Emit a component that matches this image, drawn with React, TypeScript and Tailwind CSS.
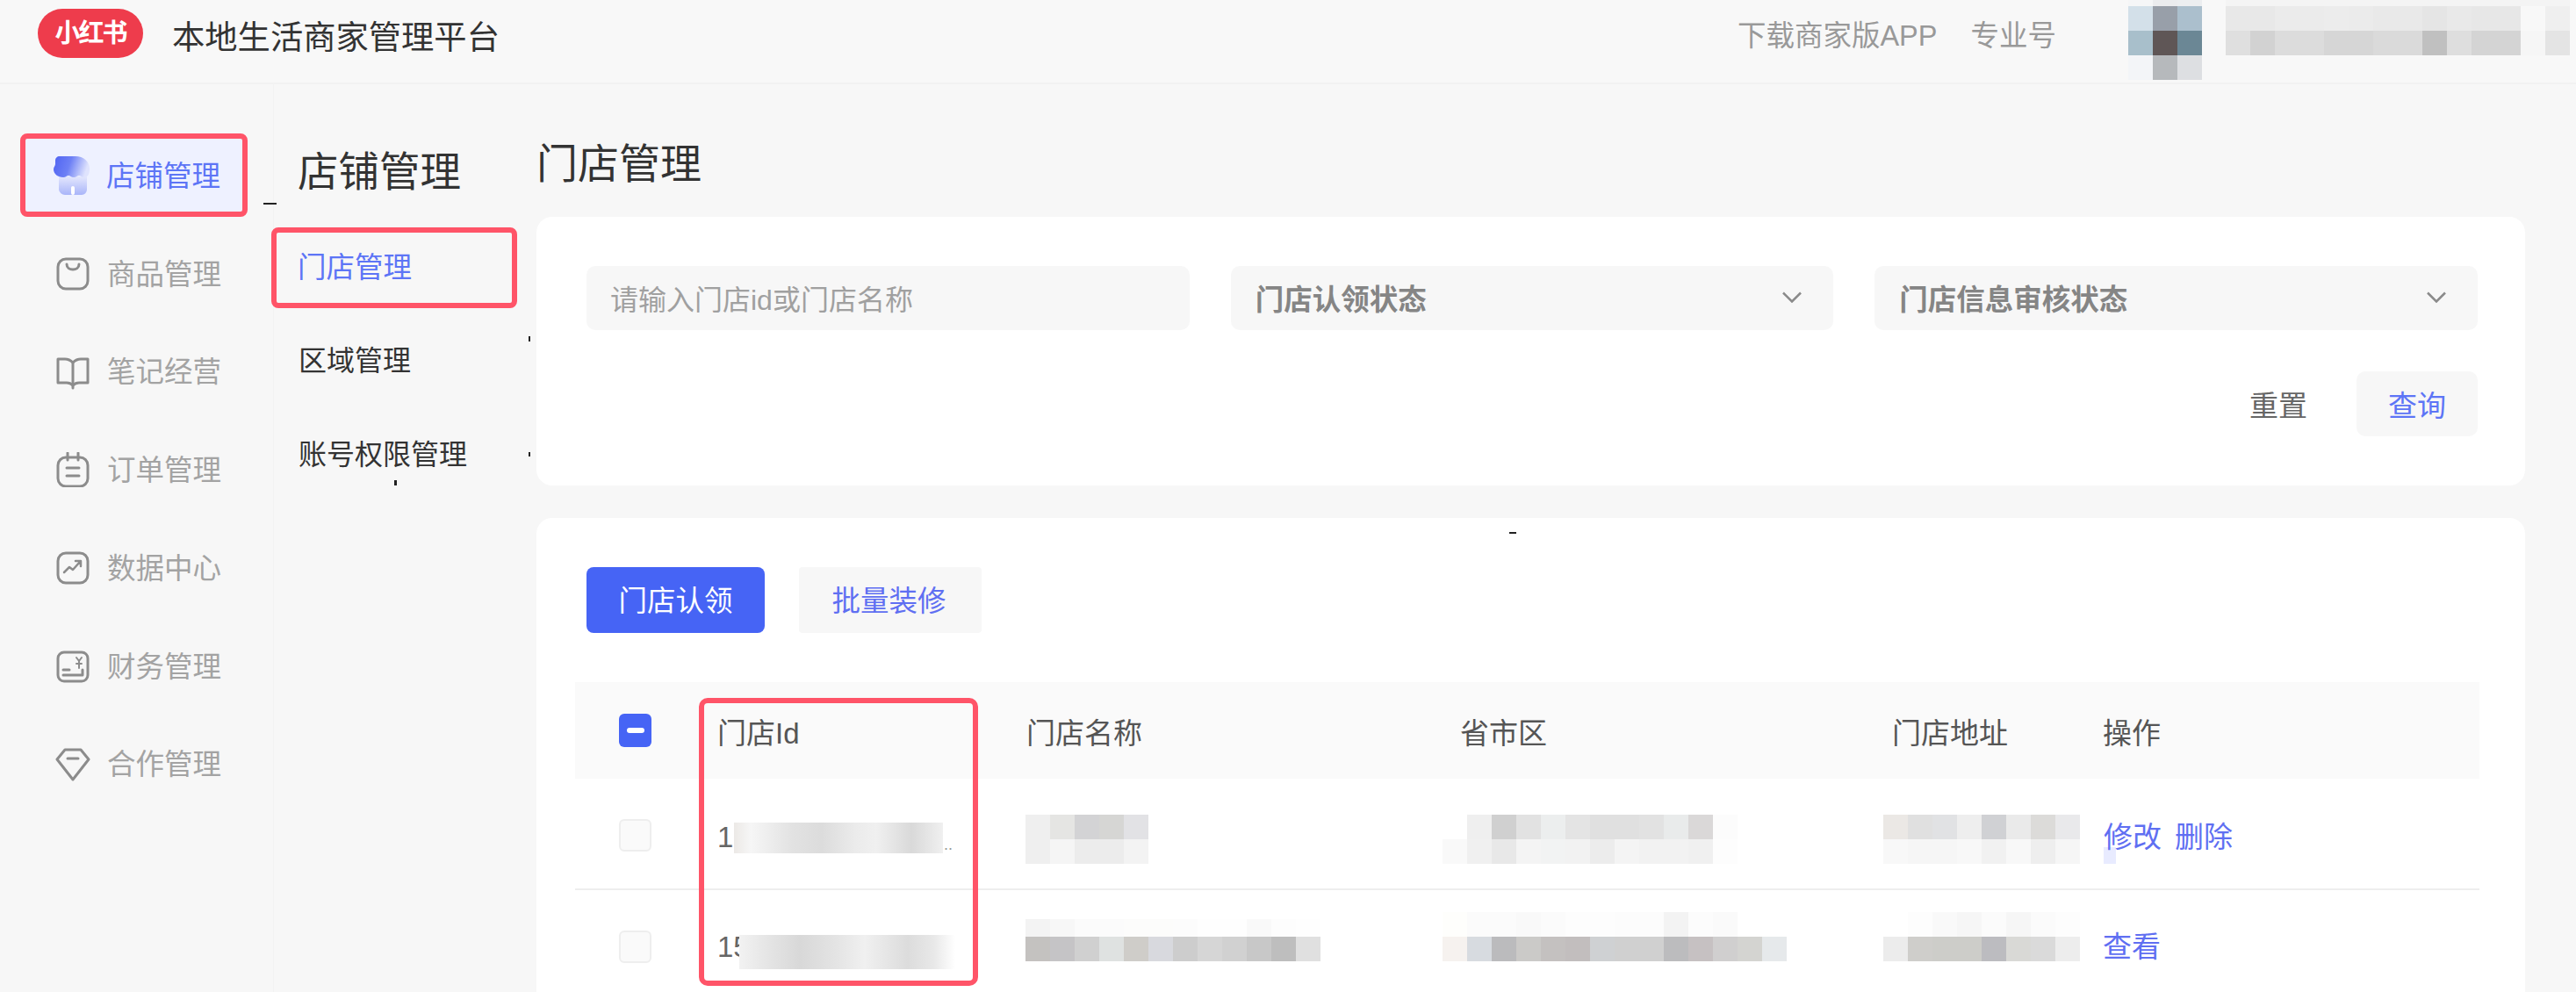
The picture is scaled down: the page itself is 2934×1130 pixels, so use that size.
import React from "react";

function Mosaic({ rows, w = 28, className = "" }: { rows: { h: number; c: string[] }[]; w?: number; className?: string }) {
  return (
    <div className={"flex flex-col shrink-0 " + className}>
      {rows.map((r, i) => (
        <div key={i} className="flex">
          {r.c.map((c, j) => (
            <div key={j} style={{ width: w, height: r.h, backgroundColor: c }} />
          ))}
        </div>
      ))}
    </div>
  );
}

const Ic = ({ children }: { children: React.ReactNode }) => (
  <svg width="40" height="40" viewBox="0 0 40 40" fill="none" stroke="#8c8c8c" strokeWidth="3" strokeLinecap="round" strokeLinejoin="round" className="shrink-0">
    {children}
  </svg>
);

const StoreIcon = () => (
  <svg width="42" height="46" viewBox="0 0 42 46" className="shrink-0">
    <defs>
      <linearGradient id="a1" x1="0" y1="0" x2="1" y2="0.2">
        <stop offset="0" stopColor="#4f63f2" />
        <stop offset="0.5" stopColor="#6d80f5" />
        <stop offset="1" stopColor="#dfe3fd" />
      </linearGradient>
      <linearGradient id="a2" x1="0" y1="0" x2="0" y2="1">
        <stop offset="0" stopColor="#e4e7fd" />
        <stop offset="1" stopColor="#a9b5f9" />
      </linearGradient>
    </defs>
    <path d="M6 24h32v15a6 6 0 0 1-6 6H13a7 7 0 0 1-7-6z" fill="url(#a2)" />
    <rect x="20" y="35" width="4" height="10" rx="2" fill="#fff" />
    <path d="M7 1h18c9 0 16 6 16 14 0 6-2 10-6 10-3 0-4-2-6-2s-3 2-6 2-4-2-6-2-3 2-6 2C5 25 0 21 0 16 0 13 2 12 2 10V6c0-3 2-5 5-5z" fill="url(#a1)" />
  </svg>
);

const navItems: { label: string; icon: React.ReactNode }[] = [
  { label: "商品管理", icon: <Ic><rect x="3" y="3" width="34" height="34" rx="9" /><path d="M13 9c0 8 14 8 14 0" /></Ic> },
  { label: "笔记经营", icon: <Ic><path d="M20 9c-3-3-6-4-9-4H3v27h10c3 0 5 1 7 3 2-2 4-3 7-3h10V5h-8c-3 0-6 1-9 4z" /><path d="M20 9v29" /></Ic> },
  { label: "订单管理", icon: <Ic><rect x="3" y="6" width="34" height="33" rx="9" /><path d="M14 1v8M26 1v8M13 18h14M13 27h14" /></Ic> },
  { label: "数据中心", icon: <Ic><rect x="3" y="3" width="34" height="34" rx="9" /><path d="M10 25l6-6 4 3 8-9M23 12h6v6" strokeWidth="2.5" /></Ic> },
  { label: "财务管理", icon: <Ic><rect x="3" y="4" width="34" height="33" rx="7" /><path d="M9 24h7M9 30h22V24" /><path d="M24 10l3 4 3-4M27 14v8M24 17h6" strokeWidth="2" /></Ic> },
  { label: "合作管理", icon: <Ic><path d="M11 4h18l9 11-18 23L2 15z" /><path d="M14 14h12" /></Ic> },
];

const Cols = "grid grid-cols-[163px_352px_494px_496px_236px_1fr]";

const Select = ({ label }: { label: string }) => (
  <div className="h-[73px] rounded-[10px] bg-[#f7f7f7] pl-[28px] pr-[35px] flex items-center justify-between">
    <span className="pt-[5px] text-[32.5px] leading-none font-bold text-[#858585]">{label}</span>
    <svg width="24" height="13" viewBox="0 0 24 13" fill="none" stroke="#8a8a8a" strokeWidth="2.5" className="-mt-[2px]">
      <path d="M2 1.5l10 10 10-10" />
    </svg>
  </div>
);

const Speck = ({ className }: { className: string }) => <div className={"absolute bg-[#222] " + className} />;

export default function App() {
  return (
    <div className="relative w-[2934px] h-[1130px] overflow-hidden bg-[#f7f7f7] flex flex-col font-['Liberation_Sans','Noto_Sans_CJK_SC',sans-serif]">
      {/* header */}
      <header className="h-[96px] shrink-0 flex items-start border-b-2 border-[#f2f2f2] bg-[#f8f8f8]">
        <div className="ml-[43px] mt-[10px] w-[120px] h-[56px] rounded-[28px] bg-[#ee3c4c] flex items-center justify-center text-white font-bold text-[29px] leading-none tracking-[-2px]">
          小红书
        </div>
        <div className="ml-[33px] mt-[24px] text-[37.3px] leading-[38px] text-[#333]">本地生活商家管理平台</div>
        <div className="ml-auto mt-[25px] flex gap-[38px] text-[32.5px] leading-[32px] text-[#999]">
          <span>下载商家版APP</span>
          <span>专业号</span>
        </div>
        <Mosaic
          className="ml-[82px]"
          rows={[
            { h: 7, c: ["#f5f6f7", "#ebecee", "#eceef0"] },
            { h: 28, c: ["#d3e0e9", "#989fa9", "#abbfcd"] },
            { h: 28, c: ["#a8bfcb", "#5f5656", "#6b8795"] },
            { h: 28, c: ["#f3f5f8", "#b6b9bc", "#dddfe2"] },
          ]}
        />
        <Mosaic
          className="ml-[27px] mr-[7px]"
          rows={[
            { h: 7, c: Array(14).fill("#f4f4f4") },
            { h: 28, c: ["#e8e8e8", "#e8e8e8", "#ebebeb", "#ebebeb", "#ececec", "#ebebeb", "#e9e9e9", "#e9e9e9", "#e5e5e5", "#e9e9e9", "#e7e7e7", "#e7e7e7", "#f8f8f8", "#efefef"] },
            { h: 28, c: ["#dfdfdf", "#d2d2d2", "#dcdcdc", "#dcdcdc", "#d6d6d6", "#d6d6d6", "#dadada", "#dadada", "#c0c0c0", "#dedede", "#d4d4d4", "#d4d4d4", "#f6f6f6", "#e4e4e4"] },
          ]}
        />
      </header>

      <div className="flex-1 flex min-h-0">
        {/* main nav */}
        <nav className="w-[312px] shrink-0 border-r border-[#f3f3f3] pt-[56px] pl-[23px]">
          <div className="w-[259px] h-[95px] rounded-[8px] border-[6px] border-[#ff5468] bg-[#eef1ff] flex items-center pl-[32px] gap-[18px] mb-[16px]">
            <StoreIcon />
            <span className="pt-[3px] text-[32.5px] leading-none text-[#5d75f6]">店铺管理</span>
          </div>
          {navItems.map((n) => (
            <div key={n.label} className="h-[96px] mb-[15.7px] pt-[2px] flex items-center pl-[40px] gap-[19px]">
              {n.icon}
              <span className="pt-[2px] text-[32.5px] leading-none text-[#a3a3a3]">{n.label}</span>
            </div>
          ))}
        </nav>

        {/* sub nav */}
        <aside className="w-[299px] shrink-0 pt-[77px] relative">
          <div className="pl-[27px] text-[46.5px] leading-[46px] text-[#333]">店铺管理</div>
          <div className="-ml-[3px] mt-[40px] w-[280px] h-[92px] rounded-[8px] border-[6px] border-[#ff5468] flex items-center pl-[24px] text-[32.5px] leading-none text-[#5d75f6]">
            门店管理
          </div>
          <div className="pl-[28px] mt-[44px] text-[32px] leading-[33px] text-[#333]">区域管理</div>
          <div className="pl-[28px] mt-[74px] text-[32px] leading-[33px] text-[#333]">账号权限管理</div>
        </aside>

        {/* content */}
        <main className="flex-1 min-w-0 pr-[58px] pt-[66px] flex flex-col">
          <h1 className="h-[46px] text-[47px] leading-[50px] font-normal text-[#333]">门店管理</h1>
          <section className="mt-[39px] h-[306px] shrink-0 rounded-[18px] bg-white pt-[56px] pl-[57px] pr-[54px]">
            <div className="grid grid-cols-3 gap-[47px]">
              <div className="h-[73px] rounded-[10px] bg-[#f7f7f7] pl-[27px] pt-[4px] flex items-center text-[32px] leading-none text-[#a0a0a0]">
                请输入门店id或门店名称
              </div>
              <Select label="门店认领状态" />
              <Select label="门店信息审核状态" />
            </div>
            <div className="mt-[47px] flex items-center justify-end">
              <span className="pt-[5px] text-[33px] leading-none text-[#666]">重置</span>
              <div className="ml-[56px] w-[138px] h-[74px] pt-[5px] rounded-[10px] bg-[#f7f7f7] flex items-center justify-center text-[33px] leading-none text-[#5d75f6]">
                查询
              </div>
            </div>
          </section>

          <section className="mt-[37px] flex-1 rounded-t-[18px] bg-white pt-[56px] pl-[44px] pr-[52px]">
            <div className="flex pl-[13px] gap-[39px]">
              <div className="w-[203px] h-[75px] pt-[4px] rounded-[8px] bg-[#4664f5] flex items-center justify-center text-[32.5px] leading-none text-white">门店认领</div>
              <div className="w-[208px] h-[75px] pt-[4px] pr-[3px] rounded-[4px] bg-[#f7f7f7] flex items-center justify-center text-[32.5px] leading-none text-[#5f6ff2]">批量装修</div>
            </div>

            <div className="relative mt-[56px]">
              <div className={Cols + " h-[110px] bg-[#fafafa] items-center text-[33px] leading-none text-[#555]"}>
                <div className="pl-[50px]">
                  <div className="w-[37px] h-[38px] rounded-[6px] bg-[#4664f5] flex items-center justify-center">
                    <div className="w-[20px] h-[6px] rounded-[3px] bg-white" />
                  </div>
                </div>
                <div className="-ml-[1px] pt-[6px]">门店Id</div>
                <div className="-ml-[1px] pt-[6px]">门店名称</div>
                <div className="-ml-[1px] pt-[6px]">省市区</div>
                <div className="-ml-[5px] pt-[6px]">门店地址</div>
                <div className="-ml-[1px] pt-[6px]">操作</div>
              </div>

              <div className={Cols + " h-[127px] border-b-2 border-[#eeeeee] items-start text-[#666] text-[33px] leading-none"}>
                <div className="pl-[50px] pt-[46px]">
                  <div className="w-[37px] h-[37px] rounded-[6px] bg-[#fafafa] border-2 border-[#eeeeee]" />
                </div>
                <div className="pt-[50px] flex items-start -ml-[1px]">
                  <span className="w-[19px]">1</span>
                  <div className="w-[238px] h-[35px] bg-[linear-gradient(90deg,#ece9e6_0%,#f6f6f6_8%,#e2e2e2_28%,#dcdcdc_42%,#ebebeb_58%,#f0f0f0_68%,#d9d9d9_85%,#f0f0f0_100%)]" />
                  <span className="text-[18px] mt-[16px] ml-[1px] text-[#999]">..</span>
                </div>
                <div className="pt-[41px] -ml-[2px]">
                  <Mosaic
                    rows={[
                      { h: 28, c: ["#efefef", "#e5e5e3", "#d3d3d5", "#d6d6d4", "#e2e2e5"] },
                      { h: 28, c: ["#efefef", "#f5f5f5", "#ececec", "#ececec", "#f3f3f3"] },
                    ]}
                  />
                </div>
                <div className="pt-[41px] -ml-[21px]">
                  <Mosaic
                    rows={[
                      { h: 28, c: ["#ffffff", "#efefef", "#d0d0d0", "#e2e2e2", "#eceeee", "#e4e4e4", "#e0e0e0", "#e0e0e0", "#e2e2e2", "#e9ebeb", "#dad8d8", "#fcfcfc"] },
                      { h: 28, c: ["#f9f9f9", "#f0f0f0", "#e8e8e8", "#f4f4f4", "#f2f3f3", "#f2f2f2", "#ececec", "#f4f4f4", "#f2f2f2", "#f2f2f2", "#f0f0f0", "#fdfdfd"] },
                    ]}
                  />
                </div>
                <div className="pt-[41px] -ml-[15px]">
                  <Mosaic
                    rows={[
                      { h: 28, c: ["#ebe8e5", "#e0e0e0", "#e1e2e4", "#eeeeee", "#d0d1d4", "#eaeaea", "#dcdbd9", "#e9e9eb"] },
                      { h: 28, c: ["#f8f8f8", "#f6f6f6", "#f6f6f6", "#f8f8f8", "#f1f1f1", "#f8f8f8", "#eeeeee", "#f6f6f6"] },
                    ]}
                  />
                </div>
                <div className="pt-[50px] flex text-[#5f6ff2] relative">
                  <div className="absolute left-0 top-[78px] w-[14px] h-[19px] bg-[#e8ebff]" />
                  <span className="relative">修改</span>
                  <span className="ml-[15px]">删除</span>
                </div>
              </div>

              <div className={Cols + " h-[120px] items-start text-[#666] text-[33px] leading-none"}>
                <div className="pl-[50px] pt-[46px]">
                  <div className="w-[37px] h-[37px] rounded-[6px] bg-[#fafafa] border-2 border-[#eeeeee]" />
                </div>
                <div className="pt-[48px] flex items-start -ml-[1px]">
                  <span className="w-[25px]">15</span>
                  <div className="w-[246px] h-[39px] mt-[3px] bg-[linear-gradient(90deg,#f2f2f2_0%,#e6e6e6_12%,#d8d8d8_28%,#e4e4e4_45%,#f0f0f0_58%,#dcdcdc_78%,#e8e8e8_90%,#ffffff_100%)]" />
                </div>
                <div className="pt-[33px] -ml-[2px]">
                  <Mosaic
                    rows={[
                      { h: 20, c: ["#f3f3f3", "#f7f7f7", "#fbfbfb", "#fbfbfb", "#fcfcfb", "#fcfcfb", "#fcfcfc", "#fefefe", "#fefefe", "#f9f9f9", "#fdfdfd", "#fefefe"] },
                      { h: 28, c: ["#c4c2c0", "#c5c4c6", "#d0d0d0", "#dfe2e1", "#cfcdc9", "#d8d9de", "#cdcdcd", "#d6d6d6", "#d1d1d1", "#c8c8c8", "#bebebe", "#e0e0e0"] },
                    ]}
                  />
                </div>
                <div className="pt-[25px] -ml-[21px]">
                  <Mosaic
                    rows={[
                      { h: 28, c: ["#fefefc", "#fbfbfb", "#fbfbfb", "#f9f9f9", "#fbfbfb", "#fdfdfd", "#fdfdfd", "#fcfcfc", "#fcfcfc", "#f3f3f3", "#fcfcfc", "#fafafa", "#ffffff", "#ffffff"] },
                      { h: 28, c: ["#f6f2ef", "#d7dbe0", "#bbbbbd", "#cbcac8", "#c4c1c0", "#c2bebe", "#cfd1d3", "#d0d0d0", "#d0d0d0", "#bcbcbe", "#c6c1c2", "#d0cfcf", "#d4d4d1", "#e6e9eb"] },
                    ]}
                  />
                </div>
                <div className="pt-[25px] -ml-[15px]">
                  <Mosaic
                    rows={[
                      { h: 28, c: ["#ffffff", "#fdfdfd", "#f9f9f9", "#f6f6f6", "#fbfbfb", "#f6f6f6", "#fbfbfb", "#fdfdfd"] },
                      { h: 28, c: ["#ececec", "#cfcecb", "#cdcdc9", "#cdcdc9", "#bcbcc0", "#d9d9d6", "#dadada", "#ededed"] },
                    ]}
                  />
                </div>
                <div className="pt-[48px] -ml-[1px] text-[#5f6ff2]">查看</div>
              </div>

              <div className="absolute left-[141px] top-[18px] w-[318px] h-[328px] rounded-[10px] border-[6px] border-[#ff5468]" />
            </div>
          </section>
        </main>
      </div>

      {/* stray capture artifacts */}
      <Speck className="left-[300px] top-[231px] w-[15px] h-[2px]" />
      <Speck className="left-[602px] top-[383px] w-[2px] h-[6px]" />
      <Speck className="left-[602px] top-[515px] w-[2px] h-[5px]" />
      <Speck className="left-[1719px] top-[606px] w-[8px] h-[2px]" />
      <Speck className="left-[449px] top-[547px] w-[3px] h-[6px]" />
    </div>
  );
}
